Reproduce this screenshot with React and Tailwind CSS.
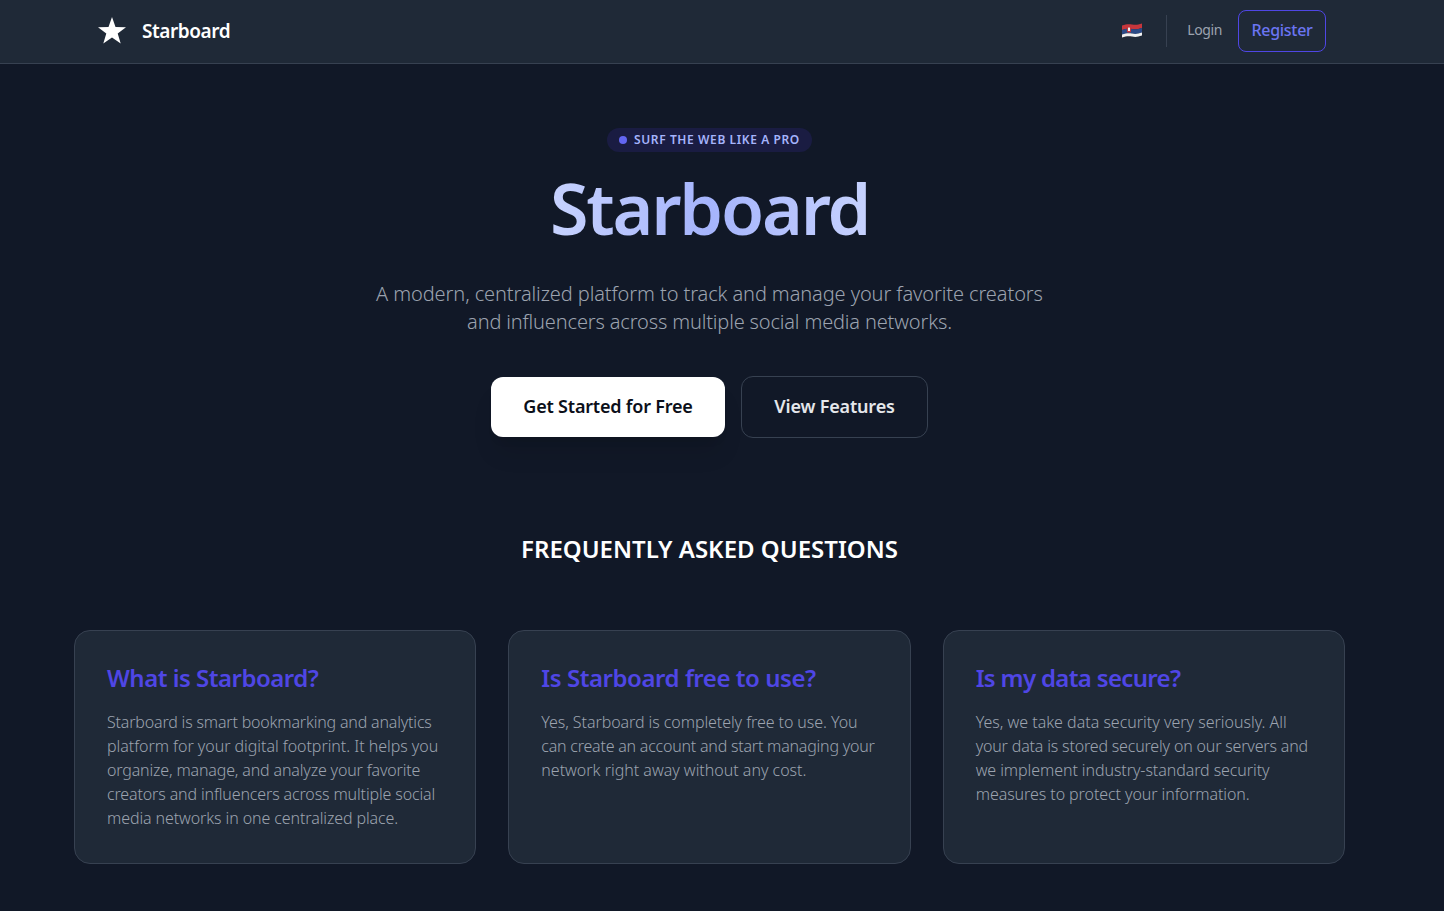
import React from "react";

function Flag() {
  return (
    <svg width="20" height="15" viewBox="0 0 20 15" className="block">
      <path d="M0 2.5 C4 1.2 6 0.8 10 1.4 C14 2 16 1.6 20 0.4 V5 C16 6.2 14 6.6 10 6 C6 5.4 4 5.8 0 7 Z" fill="#c6363c" />
      <path d="M0 7 C4 5.8 6 5.4 10 6 C14 6.6 16 6.2 20 5 V9.6 C16 10.8 14 11.2 10 10.6 C6 10 4 10.4 0 11.6 Z" fill="#2b4a86" />
      <path d="M0 11.6 C4 10.4 6 10 10 10.6 C14 11.2 16 10.8 20 9.6 V12.6 C16 13.8 14 14.2 10 13.6 C6 13 4 13.4 0 14.6 Z" fill="#f1f1f1" />
      <rect x="5" y="3.4" width="4" height="6" rx="1" fill="#c6363c" />
      <rect x="6" y="4.6" width="2" height="3.4" fill="#eeeeee" />
    </svg>
  );
}

function Card({ title, lines, titleTrack }) {
  return (
    <div className="h-[234px] rounded-2xl border border-[#374151] bg-[#1f2937] px-8 pt-[31px]">
      <h3 className={`text-2xl font-semibold leading-8 text-[#4f46e5] ${titleTrack}`}>{title}</h3>
      <p className="mt-4 text-base font-light leading-6 text-[#9ca3af]">
        {lines.map(([l, t], i) => (
          <span key={i} className={`block whitespace-nowrap ${t}`}>{l}</span>
        ))}
      </p>
    </div>
  );
}

export default function App() {
  return (
    <div className="min-h-screen bg-[#111827] font-['Noto_Sans','Open_Sans',sans-serif]">
      <nav className="flex h-16 items-center justify-between border-b border-[#374151] bg-[#1f2937] pb-[2px] pl-[98px] pr-[118px]">
        <div className="flex items-center gap-4">
          <svg width="28" height="28" viewBox="0 0 28 28" fill="#ffffff">
            <path d="M14 0L17.5 9.9 28 10.2 19.7 16.6 22.7 26.5 14 20.6 5.3 26.5 8.3 16.6 0 10.2 10.5 9.9Z" />
          </svg>
          <span className="text-[19px] font-semibold leading-7 tracking-[-0.42px] text-white">Starboard</span>
        </div>
        <div className="flex items-center">
          <Flag />
          <div className="ml-6 h-8 w-px bg-[#374151]" />
          <a className="ml-5 pb-[2px] text-sm tracking-[-0.4px] text-[#9ca3af]">Login</a>
          <a className="ml-4 flex h-[42px] w-[88px] items-center justify-center rounded-lg border border-[#4f46e5] pb-[2px] text-base font-medium tracking-[-0.3px] text-[#6b75f3]">Register</a>
        </div>
      </nav>
      <main className="flex w-[1419px] flex-col items-center pt-16 pb-[47px]">
        <div className="flex h-6 items-center gap-[7px] rounded-full bg-[#1a1c42] pl-3 pr-3">
          <span className="h-2 w-2 rounded-full bg-[#6366f1]" />
          <span className="text-xs font-semibold tracking-[0.6px] text-[#a5b4fc]">SURF THE WEB LIKE A PRO</span>
        </div>
        <h1 className="mt-5 bg-linear-to-r from-[#c7d2fe] via-[#a5b4fc] to-[#c7d2fe] bg-clip-text text-[70px] font-semibold leading-[72px] tracking-[-2.2px] text-transparent">Starboard</h1>
        <p className="mt-9 text-center text-xl font-light leading-7 text-[#9ca3af]">
          <span className="block tracking-[-0.1px]">A modern, centralized platform to track and manage your favorite creators</span>
          <span className="block tracking-[-0.155px]">and influencers across multiple social media networks.</span>
        </p>
        <div className="mt-10 flex items-center gap-4">
          <a className="flex h-[60px] w-[234px] items-center justify-center rounded-xl bg-white pb-[2px] text-lg font-semibold tracking-[-0.2px] text-[#0b0f19] shadow-[0_20px_25px_-5px_rgba(0,0,0,0.1),0_8px_10px_-6px_rgba(0,0,0,0.1)]">
            Get Started for Free
          </a>
          <a className="flex h-[62px] w-[187px] items-center justify-center rounded-xl border border-[#374151] pb-[2px] text-lg font-semibold tracking-[-0.17px] text-[#e5e7eb]">
            View Features
          </a>
        </div>
        <h2 className="mt-[95px] text-2xl font-semibold leading-8 text-white">FREQUENTLY ASKED QUESTIONS</h2>
        <div className="mt-[65px] grid w-[1271px] grid-cols-3 gap-8">
          <Card
            title="What is Starboard?"
            titleTrack="tracking-[-0.5px]"
            lines={[
              ["Starboard is smart bookmarking and analytics", "tracking-[-0.18px]"],
              ["platform for your digital footprint. It helps you", "tracking-[-0.04px]"],
              ["organize, manage, and analyze your favorite", "tracking-[-0.16px]"],
              ["creators and influencers across multiple social", "tracking-[-0.135px]"],
              ["media networks in one centralized place.", "tracking-[-0.1px]"],
            ]}
          />
          <Card
            title="Is Starboard free to use?"
            titleTrack="tracking-[-0.45px]"
            lines={[
              ["Yes, Starboard is completely free to use. You", "tracking-[-0.07px]"],
              ["can create an account and start managing your", "tracking-[-0.22px]"],
              ["network right away without any cost.", "tracking-[-0.01px]"],
            ]}
          />
          <Card
            title="Is my data secure?"
            titleTrack="tracking-[-0.67px]"
            lines={[
              ["Yes, we take data security very seriously. All", "tracking-[-0.01px]"],
              ["your data is stored securely on our servers and", "tracking-[-0.175px]"],
              ["we implement industry-standard security", "tracking-[-0.08px]"],
              ["measures to protect your information.", "tracking-[-0.07px]"],
            ]}
          />
        </div>
      </main>
    </div>
  );
}
